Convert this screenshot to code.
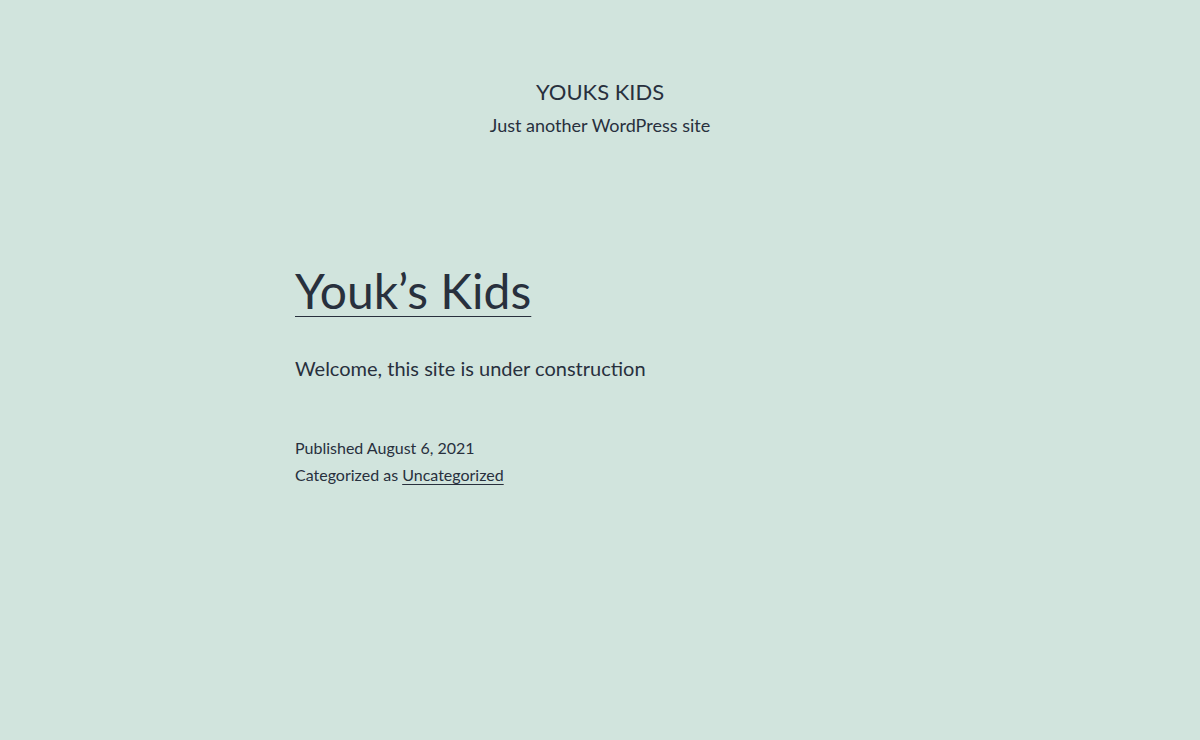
import React from 'react';

function App() {
  return (
    <div className="min-h-screen bg-[#d1e4dd] text-[#28303d] font-['Lato',sans-serif]">
      <header className="pt-[76px] text-center">
        <p className="text-[22px] leading-[31px] uppercase">
          <a href="#">Youks Kids</a>
        </p>
        <p className="mt-[5px] text-[18px] leading-[26px]">Just another WordPress site</p>
      </header>

      <main className="w-[610px] mx-auto mt-[122px]">
        <article>
          <h2 className="text-[48px] leading-[62px] font-normal">
            <a href="#" className="underline decoration-1 underline-offset-[7px]">Youk’s Kids</a>
          </h2>
          <div className="mt-[29px] text-[20px] leading-[34px]">
            <p>Welcome, this site is under construction</p>
          </div>
          <footer className="mt-[49px] text-[16px] leading-[27px]">
            <p>Published August 6, 2021</p>
            <p>
              Categorized as{' '}
              <a href="#" className="underline decoration-1 underline-offset-[3px]">Uncategorized</a>
            </p>
          </footer>
        </article>
      </main>
    </div>
  );
}

export default App;
